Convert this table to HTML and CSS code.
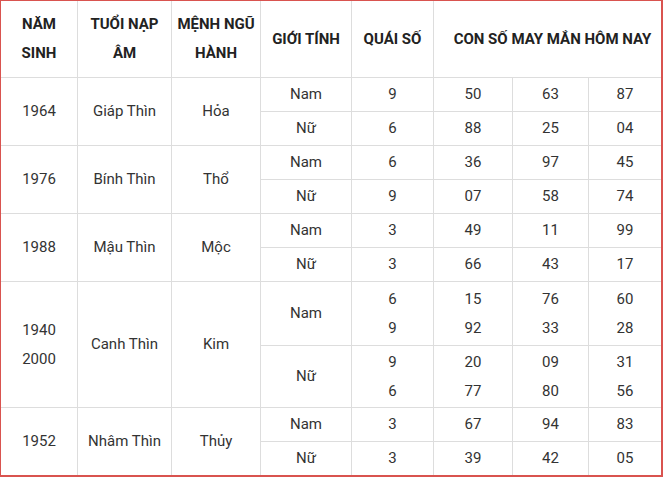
FILE: index.html
```html
<!DOCTYPE html>
<html lang="vi">
<head>
<meta charset="utf-8">
<link rel="stylesheet" href="styles.css">
</head>
<body>
<div class="frame">
<table class="lucky">
  <colgroup>
    <col class="c1"><col class="c2"><col class="c3"><col class="c4"><col class="c5"><col class="c6"><col class="c7"><col class="c8">
  </colgroup>
  <thead>
    <tr class="head">
      <th>NĂM<br>SINH</th>
      <th>TUỔI NẠP<br>ÂM</th>
      <th>MỆNH NGŨ<br>HÀNH</th>
      <th>GIỚI TÍNH</th>
      <th>QUÁI SỐ</th>
      <th colspan="3" class="lucky-head">CON SỐ MAY MẮN HÔM NAY</th>
    </tr>
  </thead>
  <tbody>
    <tr class="r"><td rowspan="2">1964</td><td rowspan="2">Giáp Thìn</td><td rowspan="2">Hỏa</td><td>Nam</td><td>9</td><td>50</td><td>63</td><td>87</td></tr>
    <tr class="r"><td>Nữ</td><td>6</td><td>88</td><td>25</td><td>04</td></tr>
    <tr class="r"><td rowspan="2">1976</td><td rowspan="2">Bính Thìn</td><td rowspan="2">Thổ</td><td>Nam</td><td>6</td><td>36</td><td>97</td><td>45</td></tr>
    <tr class="r"><td>Nữ</td><td>9</td><td>07</td><td>58</td><td>74</td></tr>
    <tr class="r"><td rowspan="2">1988</td><td rowspan="2">Mậu Thìn</td><td rowspan="2">Mộc</td><td>Nam</td><td>3</td><td>49</td><td>11</td><td>99</td></tr>
    <tr class="r"><td>Nữ</td><td>3</td><td>66</td><td>43</td><td>17</td></tr>
    <tr class="big1"><td rowspan="2">1940<br>2000</td><td rowspan="2">Canh Thìn</td><td rowspan="2">Kim</td><td>Nam</td><td>6<br>9</td><td>15<br>92</td><td>76<br>33</td><td>60<br>28</td></tr>
    <tr class="big2"><td>Nữ</td><td>9<br>6</td><td>20<br>77</td><td>09<br>80</td><td>31<br>56</td></tr>
    <tr class="r"><td rowspan="2">1952</td><td rowspan="2">Nhâm Thìn</td><td rowspan="2">Thủy</td><td>Nam</td><td>3</td><td>67</td><td>94</td><td>83</td></tr>
    <tr class="r"><td>Nữ</td><td>3</td><td>39</td><td>42</td><td>05</td></tr>
  </tbody>
</table>
</div>
</body>
</html>
```
FILE: styles.css
```css
html, body {
  margin: 0;
  padding: 0;
  background: #fff;
}
.frame {
  width: 663px;
  height: 477px;
  border: 1px solid #d9534f;
  border-right-width: 2px;
  border-bottom-width: 2px;
  box-sizing: border-box;
  overflow: hidden;
  font-family: Roboto, "Liberation Sans", sans-serif;
}
.lucky {
  border-collapse: collapse;
  table-layout: fixed;
  width: 661px;
  margin-top: -1px;
  margin-left: -1px;
  color: #333;
  font-size: 15px;
}
.c1 { width: 77px; }
.c2 { width: 94px; }
.c3 { width: 89px; }
.c4 { width: 91px; }
.c5 { width: 82px; }
.c6 { width: 79px; }
.c7 { width: 76px; }
.c8 { width: 73px; }
.lucky th, .lucky td {
  border: 1px solid #ddd;
  text-align: center;
  vertical-align: middle;
  padding: 0 2px;
  line-height: 29px;
  white-space: nowrap;
}
.lucky th {
  font-weight: 700;
  color: #222;
}
.lucky .lucky-head {
  padding-left: 12px;
}
.head th { height: 76px; }
.r td { height: 33px; }
.big1 td { height: 63px; }
.big2 td { height: 61px; }
```
